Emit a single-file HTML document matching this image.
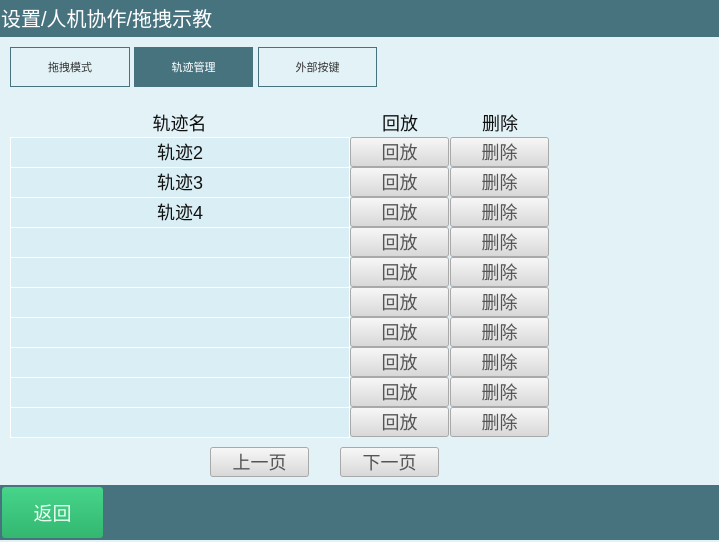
<!DOCTYPE html>
<html><head><meta charset="utf-8"><style>
*{margin:0;padding:0;box-sizing:border-box}
body{width:719px;height:540px;overflow:hidden;background:#e2f2f7;font-family:"Liberation Sans","Noto Sans CJK SC",sans-serif;position:relative}
.a{position:absolute}
.hdr{left:0;top:0;width:719px;height:37px;background:#47737f;color:#fff;font-size:20px;line-height:40px;padding-left:1px}
.tab{top:47px;height:40px;border:1px solid #47737f;font-size:11px;color:#333;text-align:center;line-height:40px}
.th{top:111px;font-size:18px;color:#111;text-align:center;line-height:26px}
.cell{left:10px;width:340px;height:31px;background:#d9eff5;border:1px solid #fff;font-size:18px;text-align:center;line-height:31px;color:#111}
.btn{width:99px;height:30px;border:1px solid #a9a9a9;border-radius:3px;background:linear-gradient(#f7f7f7,#d8d8d8);font-size:18px;color:#555;text-align:center;line-height:31px}
.foot{left:0;top:485px;width:719px;height:55px;background:#47737f}
.ret{left:2px;top:487px;width:101px;height:51px;background:linear-gradient(#46d58a,#34b770);border-radius:3px;color:#eafff3;font-size:19px;text-align:center;line-height:55px}
</style></head><body>
<div class="a hdr">设置/人机协作/拖拽示教</div>
<div class="a tab" style="left:10px;width:120px">拖拽模式</div>
<div class="a tab" style="left:134px;width:119px;background:#47737f;color:#fff">轨迹管理</div>
<div class="a tab" style="left:258px;width:119px">外部按键</div>
<div class="a th" style="left:10px;width:339px">轨迹名</div>
<div class="a th" style="left:350px;width:100px">回放</div>
<div class="a th" style="left:450px;width:100px">删除</div>
<div class="a cell" style="top:137px">轨迹2</div>
<div class="a cell" style="top:167px">轨迹3</div>
<div class="a cell" style="top:197px">轨迹4</div>
<div class="a cell" style="top:227px"></div>
<div class="a cell" style="top:257px"></div>
<div class="a cell" style="top:287px"></div>
<div class="a cell" style="top:317px"></div>
<div class="a cell" style="top:347px"></div>
<div class="a cell" style="top:377px"></div>
<div class="a cell" style="top:407px"></div>
<div class="a btn" style="left:350px;top:137px">回放</div><div class="a btn" style="left:450px;top:137px">删除</div>
<div class="a btn" style="left:350px;top:167px">回放</div><div class="a btn" style="left:450px;top:167px">删除</div>
<div class="a btn" style="left:350px;top:197px">回放</div><div class="a btn" style="left:450px;top:197px">删除</div>
<div class="a btn" style="left:350px;top:227px">回放</div><div class="a btn" style="left:450px;top:227px">删除</div>
<div class="a btn" style="left:350px;top:257px">回放</div><div class="a btn" style="left:450px;top:257px">删除</div>
<div class="a btn" style="left:350px;top:287px">回放</div><div class="a btn" style="left:450px;top:287px">删除</div>
<div class="a btn" style="left:350px;top:317px">回放</div><div class="a btn" style="left:450px;top:317px">删除</div>
<div class="a btn" style="left:350px;top:347px">回放</div><div class="a btn" style="left:450px;top:347px">删除</div>
<div class="a btn" style="left:350px;top:377px">回放</div><div class="a btn" style="left:450px;top:377px">删除</div>
<div class="a btn" style="left:350px;top:407px">回放</div><div class="a btn" style="left:450px;top:407px">删除</div>
<div class="a btn" style="left:210px;top:447px;height:30px">上一页</div>
<div class="a btn" style="left:340px;top:447px;height:30px">下一页</div>
<div class="a foot"></div>
<div class="a ret">返回</div>
</body></html>
